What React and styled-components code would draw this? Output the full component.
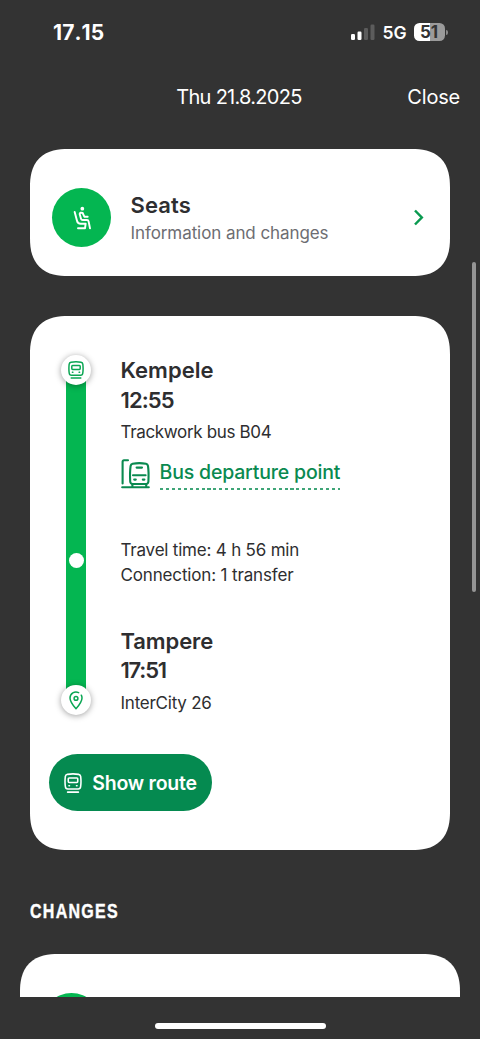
import React from 'react';
import styled, { createGlobalStyle } from 'styled-components';

const GlobalStyle = createGlobalStyle`
  *, *::before, *::after {
    box-sizing: border-box;
  }

  body {
    margin: 0;
    background: #333333;
    font-family: Inter, 'Liberation Sans', sans-serif;
    -webkit-font-smoothing: antialiased;
  }

  h1, h2, p {
    margin: 0;
    font-weight: inherit;
  }

  button {
    border: 0;
    padding: 0;
    background: none;
    font: inherit;
    color: inherit;
  }
`;

const Screen = styled.div`
  position: relative;
  width: 480px;
  height: 1039px;
  display: flex;
  flex-direction: column;
  overflow: hidden;
  background: #333333;
  color: #ffffff;
  font-weight: 440;
`;

const StatusBar = styled.div`
  flex: none;
  height: 64px;
  padding: 0 32px 0 53px;
  display: flex;
  align-items: center;
  justify-content: space-between;
`;

const Clock = styled.span`
  padding-top: 2px;
  font-size: 21px;
  font-weight: 700;
  font-kerning: none;
  line-height: 24px;
  letter-spacing: 0.1px;
`;

const StatusIcons = styled.div`
  display: flex;
  align-items: center;
`;

const Network = styled.span`
  margin: 1px 7.5px 0 7.5px;
  font-size: 17.5px;
  font-weight: 600;
  line-height: 20px;
`;

const Battery = styled.span`
  width: 31px;
  height: 17.5px;
  border-radius: 5.5px;
  background: linear-gradient(90deg, #ffffff 52%, #9b9b9b 52%);
  color: #333333;
  font-size: 17px;
  font-weight: 700;
  line-height: 18px;
  text-align: center;
  text-indent: -1px;
`;

const BatteryTip = styled.span`
  width: 2px;
  height: 5px;
  margin-left: 1px;
  border-radius: 0 2px 2px 0;
  background: #8a8a8a;
`;

const Header = styled.header`
  flex: none;
  height: 66px;
  padding-right: 20px;
  display: grid;
  grid-template-columns: 1fr auto 1fr;
  align-items: center;
  font-size: 20px;
  line-height: 24px;
`;

const HeaderTitle = styled.h1`
  grid-column: 2;
  margin-left: 18px;
  font-size: 20px;
  letter-spacing: -0.72px;
`;

const CloseButton = styled.button`
  justify-self: end;
  letter-spacing: -0.2px;
`;

const Content = styled.main`
  height: 867px;
  padding: 19px 30px 0;
  overflow: hidden;
`;

const Card = styled.section`
  background: #ffffff;
  color: #2e2e30;
  border-radius: 38px;
  corner-shape: superellipse(1.3);
`;

const SeatsCard = styled(Card)`
  height: 127px;
  padding: 10px 26px 0 22px;
  display: flex;
  align-items: center;
`;

const RoundIcon = styled.span`
  flex: none;
  width: 59px;
  height: 59px;
  border-radius: 50%;
  display: flex;
  align-items: center;
  justify-content: center;
  background: #04b651;
  color: #ffffff;
`;

const SeatsText = styled.div`
  flex: 1;
  margin-left: 19.5px;
  padding-top: 2px;
`;

const Title = styled.h2`
  font-size: 22px;
  font-weight: 600;
  line-height: 29.5px;
  letter-spacing: ${props => props.$tracking || '0'};
`;

const Subtitle = styled.p`
  padding-top: 0.5px;
  color: #6d6d72;
  font-size: 17px;
  line-height: 25px;
  letter-spacing: -0.08px;
`;

const JourneyCard = styled(Card)`
  height: 534px;
  margin-top: 40px;
  padding: 39px 19px 0;
`;

const Journey = styled.div`
  display: flex;
  height: 399px;
`;

const Rail = styled.div`
  width: 30px;
  height: 360px;
  margin: 0 29.5px 0 12px;
  display: flex;
  flex-direction: column;
  align-items: center;
`;

const RailMarker = styled.span`
  position: relative;
  flex: none;
  width: 30px;
  height: 30px;
  border-radius: 50%;
  display: flex;
  align-items: center;
  justify-content: center;
  background: #ffffff;
  color: #0aa653;
  box-shadow: 0 1px 6px rgba(0, 0, 0, 0.38);
`;

const RailLine = styled.span`
  flex: 1;
  width: 20px;
  margin: -5px 0;
  padding-top: 173px;
  display: flex;
  justify-content: center;
  background: #04b651;
`;

const RailStop = styled.span`
  width: 15px;
  height: 15px;
  border-radius: 50%;
  background: #ffffff;
`;

const Stops = styled.div`
  display: flex;
  flex-direction: column;
`;

const Text = styled.p`
  font-size: 17px;
  line-height: 25px;
  letter-spacing: ${props => props.$tracking || '-0.2px'};
`;

const Stop = styled.div`
  padding-top: 1px;

  ${Text} {
    margin-top: 5px;
  }
`;

const DepartureLink = styled.div`
  display: flex;
  align-items: flex-start;
  gap: 10px;
  margin-top: 13px;
  color: #0a8a50;

  svg {
    margin-top: 1px;
  }
`;

const DepartureLabel = styled.span`
  padding-bottom: 4px;
  font-size: 19.5px;
  font-weight: 550;
  line-height: 28px;
  letter-spacing: -0.18px;
  background: repeating-linear-gradient(90deg, #3fa577 0 3.1px, transparent 3.1px 5.93px) left bottom / 100% 2px no-repeat;
`;

const Summary = styled.div`
  margin: 48px 0 37.5px;
`;

const RouteButton = styled.button`
  width: 163px;
  height: 57px;
  padding-top: 1px;
  border-radius: 28.5px;
  display: flex;
  align-items: center;
  justify-content: center;
  gap: 10px;
  background: #058a50;
  color: #ffffff;
  font-size: 19.5px;
  font-weight: 560;
  letter-spacing: -0.24px;
`;

const SectionTitle = styled.h2`
  margin-top: 49px;
  font-family: 'Liberation Sans', sans-serif;
  font-size: 20px;
  font-weight: 700;
  line-height: 24px;
  letter-spacing: 1.6px;
  transform: scaleX(0.8);
  transform-origin: left;
  -webkit-text-stroke: 0.4px #ffffff;
`;

const ChangesCard = styled(Card)`
  height: 130px;
  margin: 30.5px -10px 0;
  padding: 39.5px 22px 0;
`;

const HomeArea = styled.div`
  flex: 1;
  display: flex;
  justify-content: center;
  padding-top: 26px;
`;

const HomeIndicator = styled.span`
  width: 171px;
  height: 6px;
  border-radius: 3px;
  background: #ffffff;
`;

const ScrollThumb = styled.span`
  position: absolute;
  top: 262px;
  right: 4px;
  width: 4px;
  height: 330px;
  border-radius: 2px;
  background: #959595;
`;

const SignalIcon = () => (
  <svg width="24" height="16" viewBox="0 0 24 16" fill="#fff">
    <rect x="0" y="10" width="4" height="6" rx="1.2" />
    <rect x="6.5" y="7.5" width="4" height="8.5" rx="1.2" />
    <rect x="13" y="4" width="4" height="12" rx="1.2" fill="#5c5c5c" />
    <rect x="19.5" y="0.5" width="4" height="15.5" rx="1.2" fill="#5c5c5c" />
  </svg>
);

const SeatIcon = () => (
  <svg width="18" height="24" viewBox="0 0 54 72" fill="none" stroke="currentColor" strokeWidth="5.8" strokeLinecap="round" strokeLinejoin="round">
    <circle cx="28" cy="8" r="5.6" fill="currentColor" stroke="none" />
    <path d="M5 18 L12 44 Q14 53 23 53 H38 L36 67 H15" />
    <path d="M44 32 H34 L29 21 Q21 18 20 24 L24 38 Q25 42 29 42 H42 Q46 42 47 47 L51 67" />
  </svg>
);

const TrainIcon = ({ size = 16, strokeWidth = 1.5 }) => (
  <svg width={size} height={size * 1.125} viewBox="0 0 16 18" fill="none" stroke="currentColor" strokeWidth={strokeWidth} strokeLinecap="round" strokeLinejoin="round">
    <path d="M3 1.2 Q8 0.3 13 1.2 Q14.6 1.5 14.8 3 Q15.4 7.5 14.8 12 Q14.6 14.2 12.6 14.2 H3.4 Q1.4 14.2 1.2 12 Q0.6 7.5 1.2 3 Q1.4 1.5 3 1.2 Z" />
    <rect x="3.8" y="4.4" width="8.4" height="4" rx="0.8" />
    <path d="M4.4 11.3 H4.9 M11.1 11.3 H11.6 M3.2 17 H12.8" />
  </svg>
);

const PinIcon = () => (
  <svg width="14" height="19" viewBox="0 0 14 19" fill="none" stroke="currentColor" strokeWidth="1.5" strokeLinecap="round" strokeLinejoin="round">
    <path d="M9.6 1.6 A6 6 0 0 0 1 7 Q1 11 7 17.8 Q13 11 13 7 Q13 5.5 12.3 4.2" />
    <circle cx="7" cy="7.4" r="1.9" />
  </svg>
);

const BusStopIcon = () => (
  <svg width="29" height="30" viewBox="0 0 29 30" fill="none" stroke="currentColor" strokeWidth="2.1" strokeLinecap="round" strokeLinejoin="round">
    <path d="M7 1.3 H3 Q1.6 1.3 1.6 2.7 V24.5" />
    <path d="M1.2 28.2 H27.8" />
    <path d="M11.6 4.8 Q18.3 3.4 25 4.8 Q26.7 5.2 27 7 Q27.9 13 27.4 22.5 Q27.2 25 25 25 H11.8 Q9.4 25 9.2 22.5 Q8.7 13 9.6 7 Q9.9 5.2 11.6 4.8 Z" />
    <path d="M15.6 8.6 H21 M12 16.2 H24.6 M13.2 20.6 H14.8 M21.8 20.6 H23.4 M11.4 25.2 V27.6 M25.2 25.2 V27.6" />
  </svg>
);

const ChevronIcon = () => (
  <svg width="11" height="17" viewBox="0 0 11 17" fill="none" stroke="#0a9a50" strokeWidth="2.5">
    <path d="M2 1.5 L8.8 8.5 L2 15.5" />
  </svg>
);

const App = () => (
  <>
    <GlobalStyle />
    <Screen>
      <StatusBar>
        <Clock>17.15</Clock>
        <StatusIcons>
          <SignalIcon />
          <Network>5G</Network>
          <Battery>51</Battery>
          <BatteryTip />
        </StatusIcons>
      </StatusBar>

      <Header>
        <HeaderTitle>Thu 21.8.2025</HeaderTitle>
        <CloseButton>Close</CloseButton>
      </Header>

      <Content>
        <SeatsCard>
          <RoundIcon>
            <SeatIcon />
          </RoundIcon>
          <SeatsText>
            <Title $tracking="0.1px">Seats</Title>
            <Subtitle>Information and changes</Subtitle>
          </SeatsText>
          <ChevronIcon />
        </SeatsCard>

        <JourneyCard>
          <Journey>
            <Rail>
              <RailMarker>
                <TrainIcon />
              </RailMarker>
              <RailLine>
                <RailStop />
              </RailLine>
              <RailMarker>
                <PinIcon />
              </RailMarker>
            </Rail>
            <Stops>
              <Stop>
                <Title>Kempele</Title>
                <Title as="p" $tracking="-0.9px">12:55</Title>
                <Text $tracking="-0.34px">Trackwork bus B04</Text>
              </Stop>
              <DepartureLink>
                <BusStopIcon />
                <DepartureLabel>Bus departure point</DepartureLabel>
              </DepartureLink>
              <Summary>
                <Text>Travel time: 4 h 56 min</Text>
                <Text $tracking="-0.15px">Connection: 1 transfer</Text>
              </Summary>
              <Stop>
                <Title $tracking="-0.1px">Tampere</Title>
                <Title as="p" $tracking="-1.2px">17:51</Title>
                <Text $tracking="-0.24px">InterCity 26</Text>
              </Stop>
            </Stops>
          </Journey>
          <RouteButton>
            <TrainIcon size={18} strokeWidth={1.4} />
            Show route
          </RouteButton>
        </JourneyCard>

        <SectionTitle>CHANGES</SectionTitle>
        <ChangesCard>
          <RoundIcon />
        </ChangesCard>
      </Content>

      <HomeArea>
        <HomeIndicator />
      </HomeArea>
      <ScrollThumb />
    </Screen>
  </>
);

export default App;
